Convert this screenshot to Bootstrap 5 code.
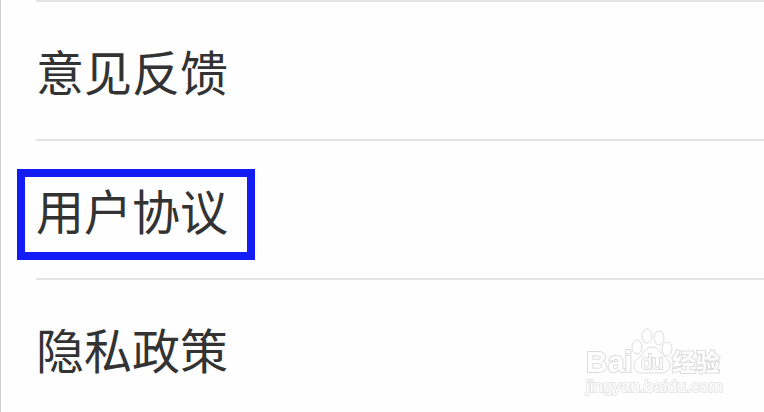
<!DOCTYPE html>
<html lang="zh-CN">
<head>
<meta charset="utf-8">
<meta name="viewport" content="width=device-width, initial-scale=1">
<title>设置</title>
<link href="https://cdn.jsdelivr.net/npm/bootstrap@5.3.0/dist/css/bootstrap.min.css" rel="stylesheet">
<style>
body { font-family: "Noto Sans CJK SC", sans-serif; background: #fefefe; overflow: hidden; }
.settings-pane { border-left: 1px solid #cdcdcd; min-height: 100vh; padding-left: 35px; }
.settings-list { --bs-list-group-bg: transparent; --bs-list-group-border-color: #e4e4e4; }
.settings-list .settings-row {
  border-width: 2px 0 0; padding: 32px 0 33px; color: #333; font-size: 48px; line-height: 72px;
}
.settings-list .settings-row:hover { background: transparent; }
.highlight-frame { border: 8px solid #141cf5; left: -19px; top: 28px; width: 238px; height: 91px; }
.watermark { right: 38px; bottom: 10px; width: 144px; height: 76px; }
.watermark text, .watermark .paw { fill: #fefefe; stroke: #dcdcdc; stroke-width: 1; }
.watermark .latin { font-family: "Liberation Sans", sans-serif; }
.watermark .cjk { font-family: "Noto Sans CJK SC", sans-serif; }
.watermark text { paint-order: stroke; stroke-width: 2; }
.watermark .site { stroke: #e6e6e6; }
</style>
<script src="https://cdn.jsdelivr.net/npm/bootstrap@5.3.0/dist/js/bootstrap.bundle.min.js"></script>
</head>
<body>
<main class="settings-pane position-relative">
  <nav class="list-group list-group-flush settings-list" aria-label="设置">
    <a class="list-group-item list-group-item-action settings-row" href="#feedback">意见反馈</a>
    <a class="list-group-item list-group-item-action settings-row" href="#agreement">用户协议<span class="highlight-frame position-absolute"></span></a>
    <a class="list-group-item list-group-item-action settings-row" href="#privacy">隐私政策</a>
  </nav>
</main>
<svg class="watermark position-fixed" viewBox="0 0 144 76" role="img" aria-label="Baidu 经验">
  <text class="latin" x="4" y="46" font-size="30" font-weight="700">Bai</text>
  <g class="paw">
    <ellipse cx="55" cy="21" rx="5" ry="7"/>
    <ellipse cx="65" cy="10" rx="5" ry="7"/>
    <ellipse cx="77" cy="12" rx="5" ry="7"/>
    <ellipse cx="85" cy="23" rx="5" ry="7"/>
    <path d="M70 21C64 21 62 26 59 30C55 33 52 35 52 40C52 45 56 47 61 47H79C84 47 88 44 88 39C88 34 82 31 79 27C77 24 75 21 70 21Z"/>
  </g>
  <text class="latin" x="59" y="43" font-size="20">du</text>
  <text class="cjk" x="90" y="45" font-size="24" font-weight="700">经验</text>
  <text class="latin site" x="4" y="66" font-size="17">jingyan.baidu.com</text>
</svg>
</body>
</html>
